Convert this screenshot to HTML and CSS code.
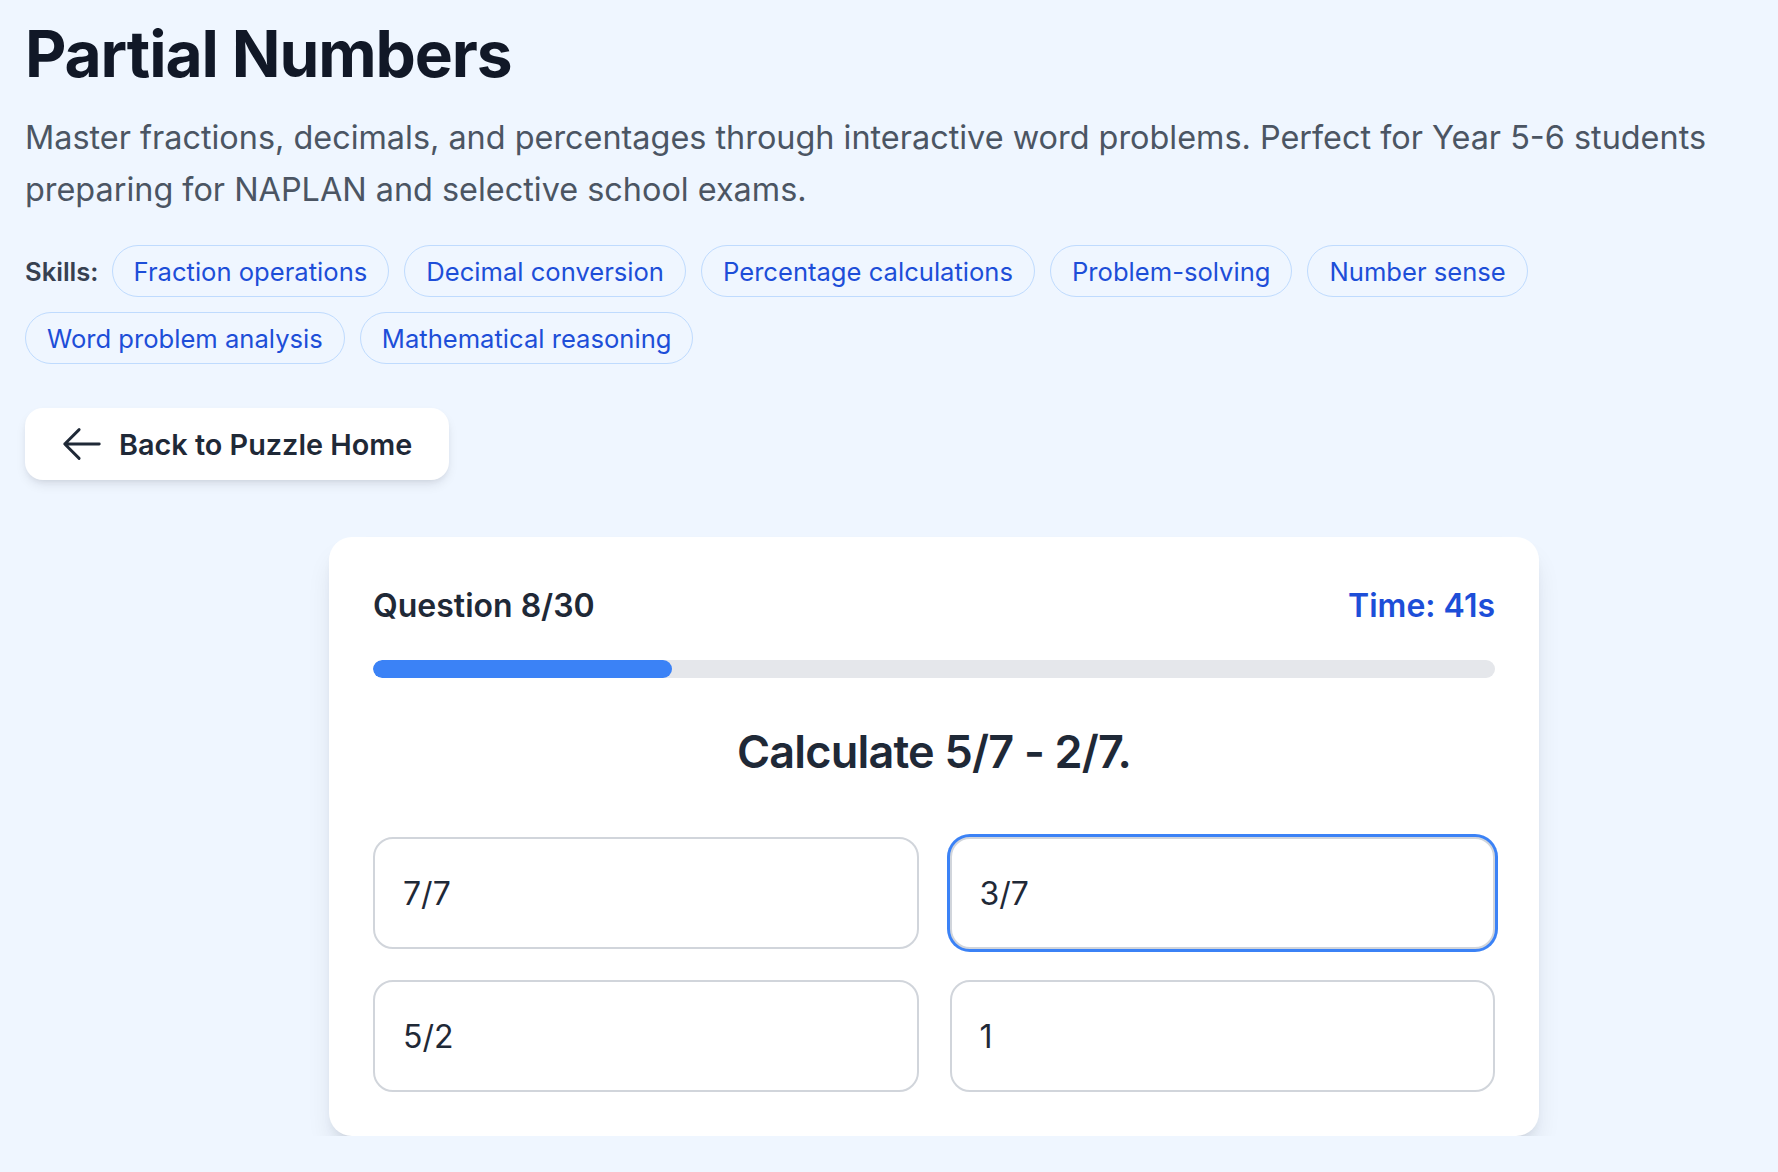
FILE: index.html
```html
<!DOCTYPE html>
<html lang="en">
<head>
<meta charset="utf-8">
<title>Partial Numbers</title>
<link rel="stylesheet" href="styles.css">
</head>
<body>
<main class="page">
  <h1 class="title">Partial Numbers</h1>
  <p class="desc">Master fractions, decimals, and percentages through interactive word problems. Perfect for Year 5-6 students preparing for NAPLAN and selective school exams.</p>
  <div class="skills">
    <span class="skills-label">Skills:</span>
    <span class="pill">Fraction operations</span>
    <span class="pill">Decimal conversion</span>
    <span class="pill">Percentage calculations</span>
    <span class="pill">Problem-solving</span>
    <span class="pill">Number sense</span>
    <span class="pill">Word problem analysis</span>
    <span class="pill">Mathematical reasoning</span>
  </div>
  <button class="back-btn" type="button">
    <svg class="back-icon" viewBox="0 0 24 24" fill="none" stroke="currentColor" stroke-width="1.5" stroke-linecap="round" stroke-linejoin="round"><path d="M10.5 19.5 3 12m0 0 7.5-7.5M3 12h18"/></svg>
    <span>Back to Puzzle Home</span>
  </button>
  <section class="card">
    <div class="card-head">
      <span class="q-count">Question 8/30</span>
      <span class="timer">Time: 41s</span>
    </div>
    <div class="progress"><div class="progress-fill" style="width: 26.67%"></div></div>
    <h2 class="question">Calculate 5/7 - 2/7.</h2>
    <div class="options">
      <button class="option" type="button">7/7</button>
      <button class="option selected" type="button">3/7</button>
      <button class="option" type="button">5/2</button>
      <button class="option" type="button">1</button>
    </div>
  </section>
</main>
</body>
</html>
```
FILE: styles.css
```css
* { box-sizing: border-box; }
html, body { margin: 0; padding: 0; }
body {
  background: #eff6ff;
  font-family: Inter, "Noto Sans", "Liberation Sans", sans-serif;
  color: #111827;
  overflow: hidden;
}
.page {
  padding: 14px 25px 0 25px;
}
.title {
  margin: 0;
  font-size: 64px;
  line-height: 80px;
  font-weight: 700;
  color: #111827;
  letter-spacing: -1.1px;
}
.desc {
  margin: 18px 0 0 0;
  font-size: 32.4px;
  line-height: 52px;
  color: #4b5563;
}
.skills {
  margin-top: 29px;
  display: flex;
  flex-wrap: wrap;
  align-items: center;
  gap: 15px 15px;
}
.skills-label {
  font-size: 25.6px;
  font-weight: 600;
  color: #374151;
  margin-right: -2px;
}
.pill {
  height: 52px;
  display: inline-flex;
  align-items: center;
  padding: 0 21px;
  border: 1.5px solid #bfdbfe;
  border-radius: 999px;
  background: #eff6ff;
  color: #1d4ed8;
  font-size: 25.6px;
}
.back-btn {
  margin-top: 44px;
  display: inline-flex;
  align-items: center;
  gap: 14px;
  height: 72px;
  padding: 0 37px 0 34px;
  border: none;
  border-radius: 18px;
  background: #ffffff;
  box-shadow: 0 6px 12px -2px rgba(15, 23, 42, 0.10), 0 3px 6px -3px rgba(15, 23, 42, 0.10);
  font-family: inherit;
  font-size: 28.8px;
  font-weight: 600;
  color: #1f2937;
}
.back-icon {
  width: 46px;
  height: 46px;
  display: block;
}
.card {
  margin: 57px 0 0 304px;
  width: 1210px;
  background: #ffffff;
  border-radius: 23px;
  padding: 44px;
  box-shadow: 0 18px 28px -6px rgba(15, 23, 42, 0.12), 0 8px 12px -6px rgba(15, 23, 42, 0.10);
}
.card-head {
  display: flex;
  justify-content: space-between;
  align-items: center;
  line-height: 50px;
  font-size: 32px;
  font-weight: 600;
}
.q-count { color: #1f2937; }
.timer { color: #1d4ed8; }
.progress {
  margin-top: 29px;
  height: 18px;
  border-radius: 999px;
  background: #e5e7eb;
  overflow: hidden;
}
.progress-fill {
  height: 100%;
  border-radius: 999px;
  background: #3b82f6;
}
.question {
  margin: 45px 0 0 0;
  text-align: center;
  font-size: 45px;
  line-height: 58px;
  font-weight: 600;
  letter-spacing: -0.8px;
  color: #1f2937;
}
.options {
  margin-top: 56px;
  display: grid;
  grid-template-columns: 1fr 1fr;
  gap: 31px;
}
.option {
  height: 112px;
  display: flex;
  align-items: center;
  padding: 0 28px;
  border: 2.5px solid #d1d5db;
  border-radius: 20px;
  background: #ffffff;
  font-family: inherit;
  font-size: 32px;
  color: #1f2937;
  text-align: left;
}
.option.selected {
  box-shadow: 0 0 0 3px #3b82f6;
}
```
